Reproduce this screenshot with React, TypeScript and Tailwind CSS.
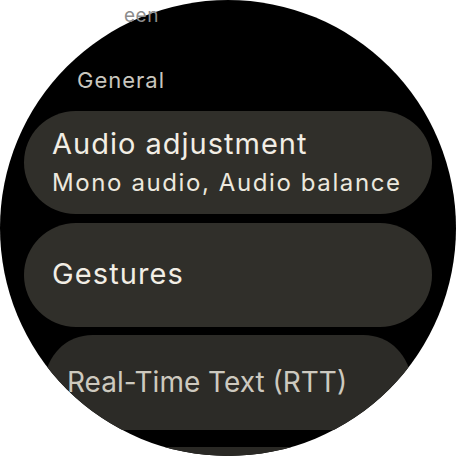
const font = { fontFamily: 'Inter, "Open Sans", sans-serif' };

export default function App() {
  return (
    <div className="relative w-[456px] h-[456px] bg-white overflow-hidden" style={font}>
      <div className="w-[456px] h-[456px] rounded-full bg-black overflow-hidden flex flex-col items-center">
        <div className="self-start mt-[66px] pl-[77px] h-[28px] text-[22px] leading-[28px] tracking-[1px] text-[#c9c6be]">
          General
        </div>

        <div className="mt-[17px] w-[408px] h-[103px] shrink-0 rounded-full bg-[#302f2a] pl-[28px] pt-[15px] flex flex-col">
          <span className="text-[29px] leading-[36px] tracking-[1px] text-[#f2eee5]">
            Audio adjustment
          </span>
          <span className="mt-[6px] text-[24px] leading-[30px] tracking-[1.6px] text-[#ece8de]">
            Mono audio, Audio balance
          </span>
        </div>

        <div className="mt-[9px] w-[408px] h-[104px] shrink-0 rounded-full bg-[#302f2a] pl-[28px] pt-[33px]">
          <span className="text-[29px] leading-[36px] tracking-[1.1px] text-[#f2eee5]">
            Gestures
          </span>
        </div>

        <div className="mt-[8px] w-[366px] h-[95px] shrink-0 rounded-full bg-[#2c2b27] pl-[22px] pt-[29px]">
          <span className="text-[28px] leading-[36px] text-[#cdc9bf]">
            Real-Time Text (RTT)
          </span>
        </div>

        <div className="mt-[17px] w-[340px] h-[100px] shrink-0 rounded-full bg-[#2a2925]" />
      </div>

      <div className="absolute left-[124px] top-[4px] text-[19px] leading-[24px] tracking-[0.5px] text-[#8c8c8c]">
        een
      </div>
    </div>
  );
}
